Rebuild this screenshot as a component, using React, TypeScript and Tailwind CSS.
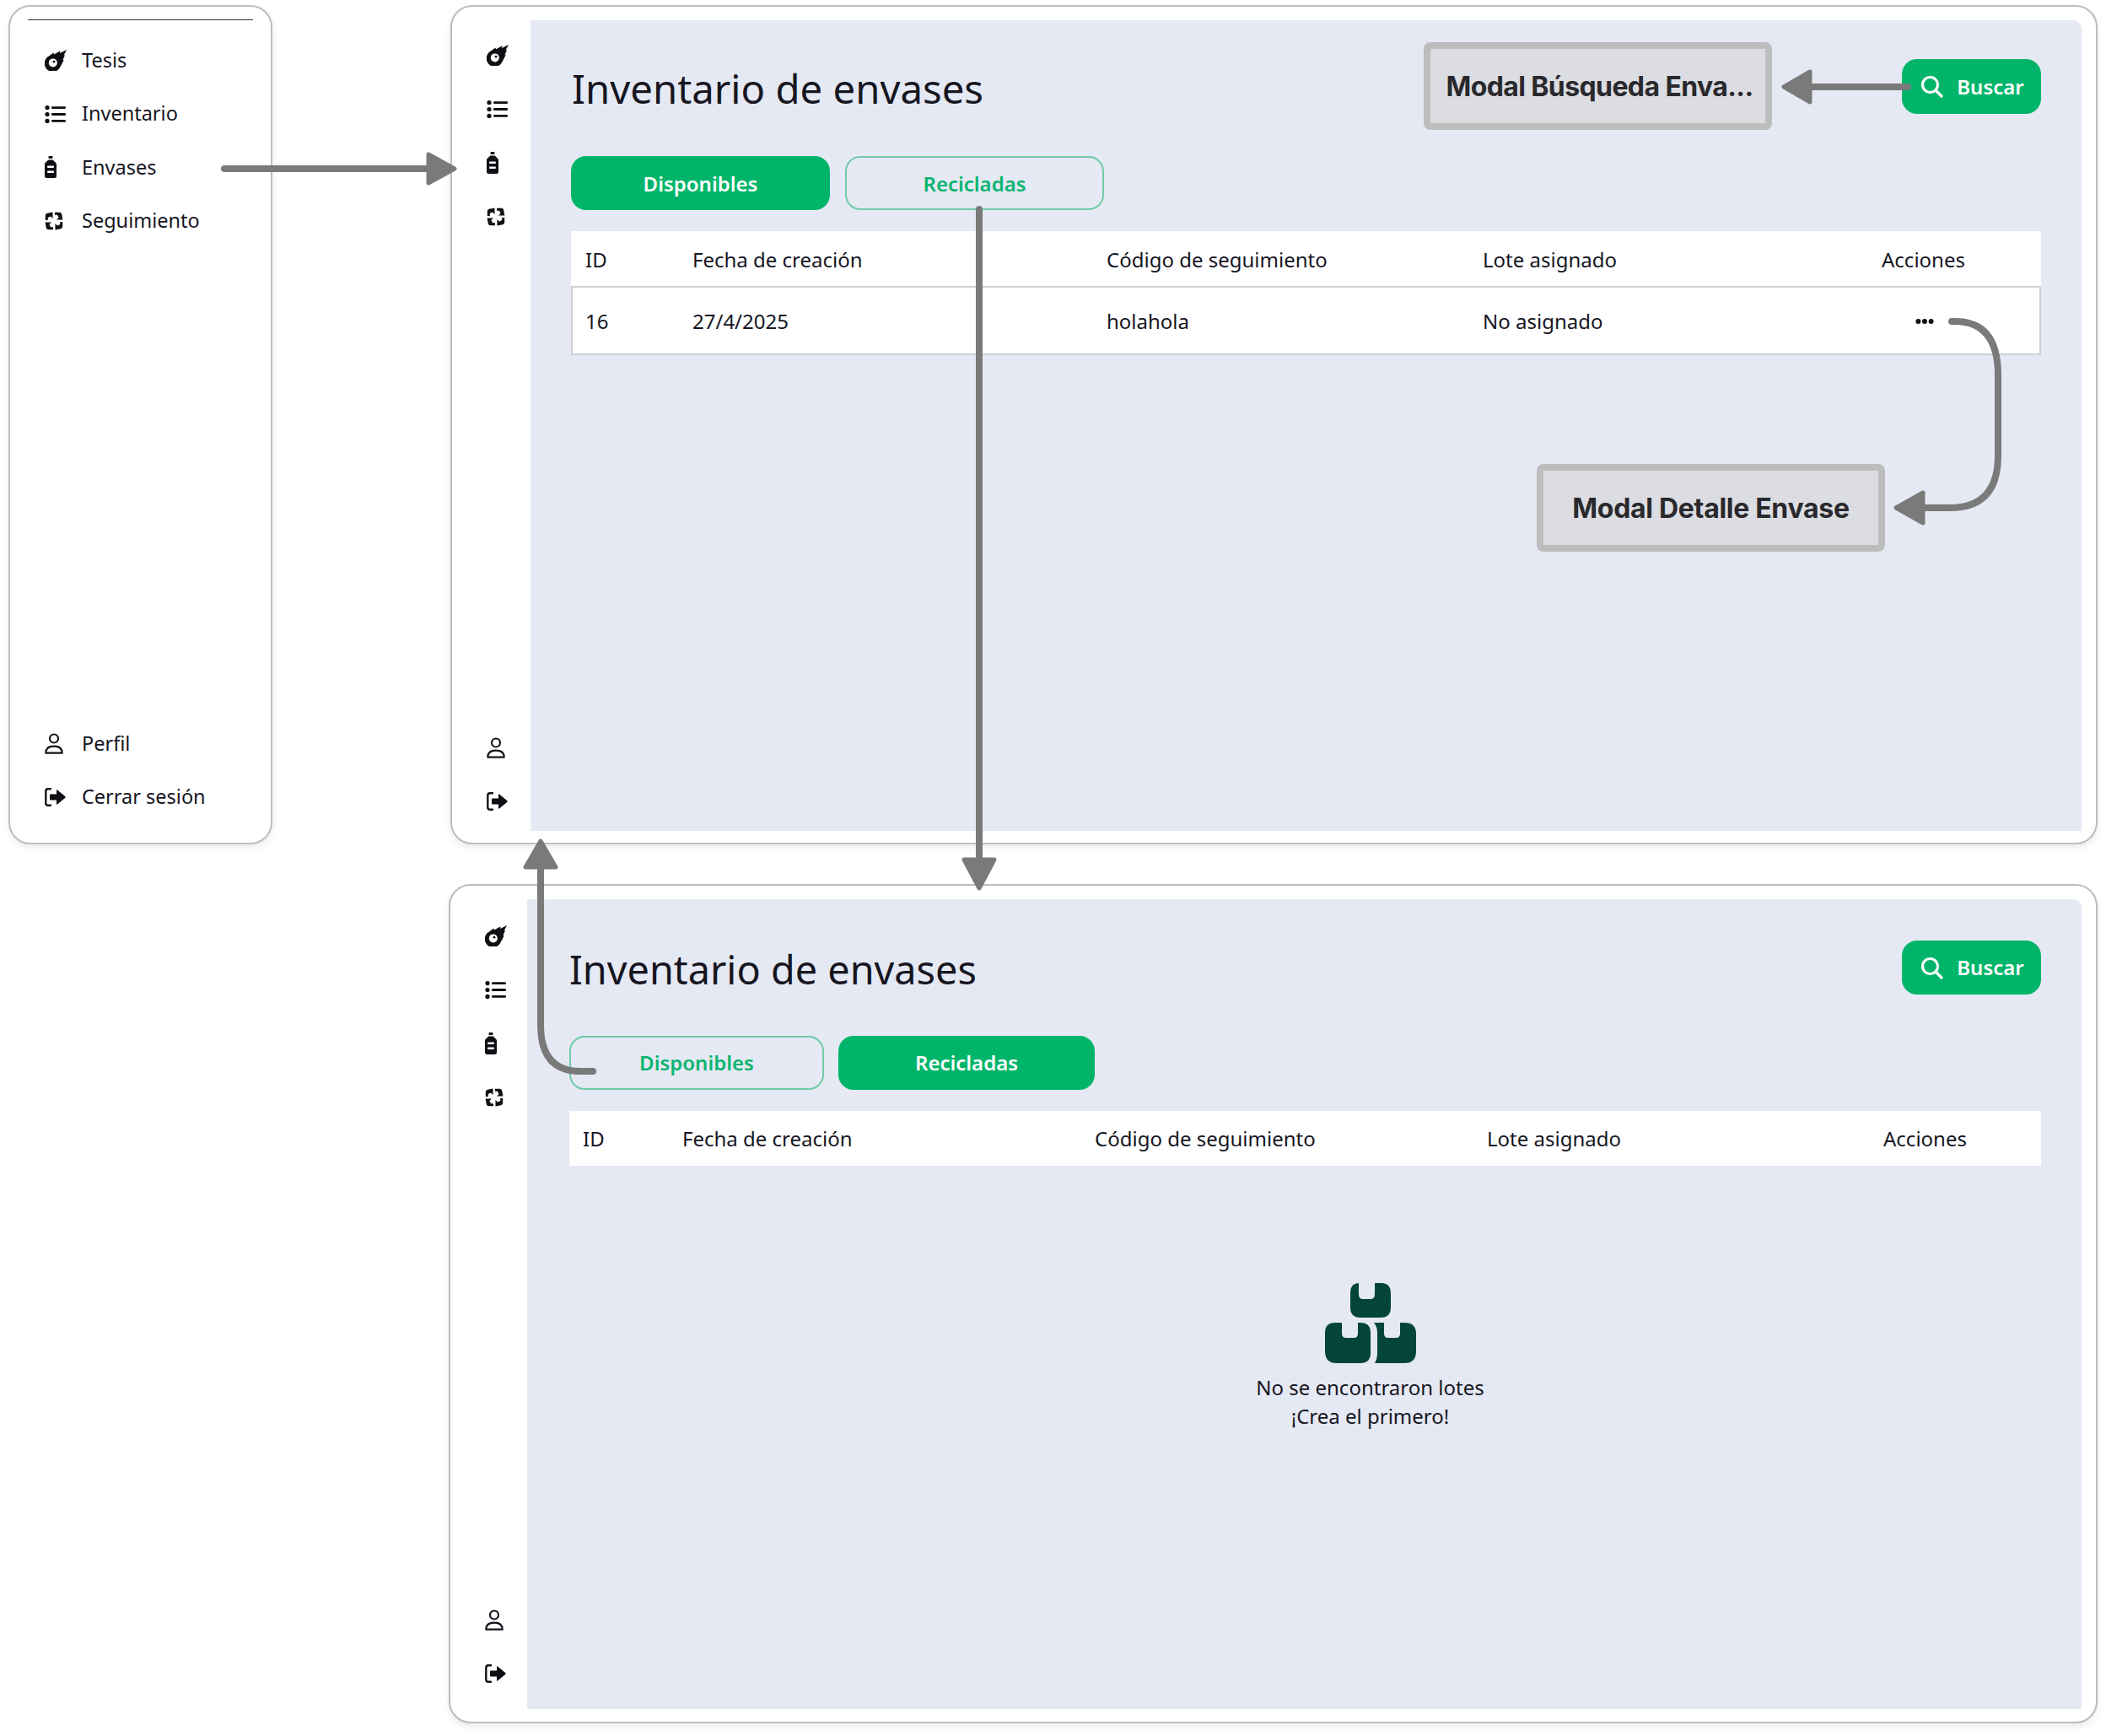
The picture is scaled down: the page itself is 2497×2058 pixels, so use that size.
import React from "react";

const Meteor = () => (
  <svg width="26" height="25" viewBox="0 0 26 25" className="block">
    <path fill="#0f0f14" d="M5 7.5L10.5 3.4L11 5.4L18.6 1.2L18 4L26 0L22.6 6.6L24 6.2L21.4 12.2L22.8 12L18.6 20A9.8 9.8 0 1 1 5 7.5Z" />
    <circle cx="9.8" cy="15.4" r="5" fill="#fff" />
    <circle cx="11" cy="14.2" r="1.4" fill="#0f0f14" />
  </svg>
);
const ListI = () => (
  <svg width="26" height="21" viewBox="0 0 26 21" className="block" fill="#0f0f14">
    <circle cx="3" cy="2.6" r="2.6" /><circle cx="3" cy="10.5" r="2.6" /><circle cx="3" cy="18.4" r="2.6" />
    <rect x="8" y="1.2" width="17" height="2.8" rx="1.2" /><rect x="8" y="9.1" width="17" height="2.8" rx="1.2" /><rect x="8" y="17" width="17" height="2.8" rx="1.2" />
  </svg>
);
const Bottle = () => (
  <svg width="14" height="26" viewBox="0 0 14 26" className="block" fill="#0f0f14">
    <rect x="4.5" y="0" width="5" height="3" rx="1" />
    <path d="M4 4.5H10C10.5 6.5 14 7 14 10V23.5A2.5 2.5 0 0 1 11.5 26H2.5A2.5 2.5 0 0 1 0 23.5V10C0 7 3.5 6.5 4 4.5Z" />
    <rect x="3" y="11.5" width="8" height="2.6" rx="1" fill="#fff" />
    <rect x="3" y="17.5" width="8" height="2.6" rx="1" fill="#fff" />
  </svg>
);
const RecycleI = () => {
  const piece = "M0.8 10V4.5Q0.8 2.2 3 1.8L9.5 0.6V8L7 5.4L3.8 7V10Z";
  return (
    <svg width="22" height="22" viewBox="0 0 22 22" className="block" fill="#0f0f14">
      <path d={piece} />
      <path d={piece} transform="rotate(90 11 11)" />
      <path d={piece} transform="rotate(180 11 11)" />
      <path d={piece} transform="rotate(270 11 11)" />
    </svg>
  );
};
const UserI = () => (
  <svg width="22" height="25" viewBox="0 0 22 25" className="block" fill="none" stroke="#12121a" strokeWidth="2.2">
    <circle cx="11" cy="6.5" r="5" />
    <path d="M1.3 23.7C1.3 18.5 5 15.6 11 15.6C17 15.6 20.7 18.5 20.7 23.7Z" strokeLinejoin="round" />
  </svg>
);
const LogoutI = () => (
  <svg width="25" height="22" viewBox="0 0 25 22" className="block">
    <path d="M7 1.3H4Q1.3 1.3 1.3 4V18Q1.3 20.7 4 20.7H7" fill="none" stroke="#12121a" strokeWidth="2.4" strokeLinecap="round" />
    <path fill="#0f0f14" d="M7 7.5H14V2.8Q14 2 15 2.6L24.4 10.3Q25 11 24.4 11.7L15 19.4Q14 20 14 19.2V14.5H7Q6 14.5 6 13.5V8.5Q6 7.5 7 7.5Z" />
  </svg>
);
const SearchI = () => (
  <svg width="27" height="27" viewBox="0 0 27 27" className="block" fill="none" stroke="#fff" strokeWidth="3.2" strokeLinecap="round">
    <circle cx="11.5" cy="11.5" r="9" />
    <path d="M18 18L25 25" />
  </svg>
);

const top = [
  { label: "Tesis", icon: <Meteor /> },
  { label: "Inventario", icon: <ListI /> },
  { label: "Envases", icon: <Bottle /> },
  { label: "Seguimiento", icon: <RecycleI /> },
];
const bottom = [
  { label: "Perfil", icon: <UserI /> },
  { label: "Cerrar sesión", icon: <LogoutI /> },
];

const Win = ({ className, children }: { className: string; children: React.ReactNode }) => (
  <div className={`absolute flex border-2 border-[#bdbdbd] rounded-[26px] bg-white shadow-[0_4px_8px_rgba(0,0,0,0.08)] overflow-hidden ${className}`}>
    {children}
  </div>
);

const IconRail = ({ cls }: { cls: string }) => (
  <div className={`flex flex-col justify-between pl-[41px] shrink-0 ${cls}`}>
    <div className="flex flex-col">
      {top.map((i) => (
        <div key={i.label} className="h-16 flex items-center">{i.icon}</div>
      ))}
    </div>
    <div className="flex flex-col">
      {bottom.map((i) => (
        <div key={i.label} className="h-[63px] flex items-center">{i.icon}</div>
      ))}
    </div>
  </div>
);

const BuscarBtn = ({ h }: { h: string }) => (
  <div className={`w-[165px] ${h} shrink-0 rounded-[18px] bg-[#00b56a] flex items-center justify-center gap-[16px] pl-[2px] text-white text-[24px] font-semibold`}>
    <SearchI />
    <span>Buscar</span>
  </div>
);

const Tab = ({ label, active, cls }: { label: string; active: boolean; cls: string }) => (
  <div
    className={`${cls} flex items-center justify-center rounded-[18px] text-[24px] font-semibold ${
      active ? "bg-[#00b56a] text-white" : "border-2 border-[#6fcba6] text-[#0ab56f]"
    }`}
  >
    {label}
  </div>
);

export default function App() {
  return (
    <div className="relative w-[2497px] h-[2058px] bg-white overflow-hidden text-[#16161f] font-['Noto_Sans','Open_Sans',sans-serif]">
      {/* expanded sidebar */}
      <Win className="left-[10px] top-[6px] w-[313px] h-[995px] flex-col">
        <div className="mx-[21px] mt-[15px] border-t border-[#2f3344]" />
        <div className="flex flex-col flex-1 justify-between pl-[41px] pb-[23px] mt-[16px]">
          <div className="flex flex-col">
            {top.map((i) => (
              <div key={i.label} className="h-[63.4px] flex items-center text-[23.5px]">
                <span className="w-[44px] shrink-0">{i.icon}</span>
                {i.label}
              </div>
            ))}
          </div>
          <div className="flex flex-col">
            {bottom.map((i) => (
              <div key={i.label} className="h-[63px] flex items-center text-[23.5px]">
                <span className="w-[44px] shrink-0">{i.icon}</span>
                {i.label}
              </div>
            ))}
          </div>
        </div>
      </Win>

      {/* Disponibles */}
      <Win className="left-[534px] top-[6px] w-[1953px] h-[995px]">
        <IconRail cls="w-[93px] pt-[25px] pb-[18px]" />
        <div className="flex-1 mt-[16px] mb-[14px] mr-[17px] bg-[#e5e9f4] rounded-tr-[10px] pl-[48px] pr-[48px] pt-[46px]">
          <div className="flex items-center justify-between">
            <h1 className="text-[47.3px] h-[65px] leading-[69px] pl-[1px] font-normal">Inventario de envases</h1>
            <BuscarBtn h="h-[65px]" />
          </div>
          <div className="flex gap-[18px] mt-[50px]">
            <Tab label="Disponibles" active cls="w-[307px] h-[64px] pt-[2px]" />
            <Tab label="Recicladas" active={false} cls="w-[307px] h-[64px] pt-[2px]" />
          </div>
          <div className="mt-[25px] text-[24px]">
            <div className="grid grid-cols-[127px_491px_446px_473px_1fr] items-center h-[67px] bg-white pl-[17px] pt-[2px] border-b-2 border-[#d0d0d4]">
              <span>ID</span><span>Fecha de creación</span><span>Código de seguimiento</span><span>Lote asignado</span><span>Acciones</span>
            </div>
            <div className="grid grid-cols-[127px_491px_446px_473px_1fr] items-center h-[80px] bg-white pl-[15px] pt-[2px] border-x-2 border-b-2 border-[#d0d0d4]">
              <span>16</span><span>27/4/2025</span><span>holahola</span><span>No asignado</span>
              <span className="pl-[40px]">
                <svg width="22" height="8" viewBox="0 0 22 8" fill="#12121a" className="block">
                  <circle cx="3.4" cy="4" r="3" /><circle cx="11" cy="4" r="3" /><circle cx="18.6" cy="4" r="3" />
                </svg>
              </span>
            </div>
          </div>
        </div>
      </Win>

      {/* Recicladas */}
      <Win className="left-[532px] top-[1048px] w-[1955px] h-[995px]">
        <IconRail cls="w-[91px] pt-[27px] pb-[26px]" />
        <div className="flex-1 mt-[16px] mb-[15px] mr-[17px] bg-[#e5e9f4] rounded-tr-[10px] pl-[50px] pr-[48px] pt-[49px]">
          <div className="flex items-center justify-between">
            <h1 className="text-[46.8px] h-[64px] leading-[68px] font-normal">Inventario de envases</h1>
            <BuscarBtn h="h-[64px]" />
          </div>
          <div className="flex gap-[17px] mt-[49px]">
            <Tab label="Disponibles" active={false} cls="w-[302px] h-[64px]" />
            <Tab label="Recicladas" active cls="w-[304px] h-[64px]" />
          </div>
          <div className="mt-[25px] grid grid-cols-[118px_489px_465px_470px_1fr] items-center h-[65px] bg-white pl-[16px] text-[24px]">
            <span>ID</span><span>Fecha de creación</span><span>Código de seguimiento</span><span>Lote asignado</span><span>Acciones</span>
          </div>
          <div className="mt-[139px] flex flex-col items-center pl-[154px]">
            <svg width="108" height="95" viewBox="0 0 108 95" fill="#03453a" className="block">
              <path d="M41 0H30Q30 0 30 0H40V13Q40 19 45 19H54Q59 19 59 13V0H66Q78 0 78 12V29Q78 41 66 41H42Q30 41 30 29V12Q30 0 41 0Z" />
              <path d="M12 47H20V60Q20 65 25 65H34Q39 65 39 60V47H42Q54 47 54 59V83Q54 95 42 95H14Q0 95 0 81V59Q0 47 12 47Z" />
              <path d="M60 47H70V60Q70 65 75 65H84Q89 65 89 60V47H94Q108 47 108 60V81Q108 95 94 95H59Q62 90 62 83V59Q62 52 58 47Z" />
            </svg>
            <p className="text-[24px] leading-[34px] mt-[12px] text-center">No se encontraron lotes<br />¡Crea el primero!</p>
          </div>
        </div>
      </Win>

      {/* modal labels */}
      <div className="absolute left-[1688px] top-[50px] w-[413px] h-[104px] pt-[2px] pl-[4px] rounded-[8px] border-[8px] border-[#bdbdbd] bg-[#dcdde2] flex items-center justify-center text-[32px] font-bold text-[#29292d] font-['Inter',sans-serif] tracking-[-0.6px] whitespace-nowrap">
        Modal Búsqueda Enva...
      </div>
      <div className="absolute left-[1822px] top-[550px] w-[413px] h-[104px] pt-[2px] rounded-[8px] border-[8px] border-[#bdbdbd] bg-[#dcdde2] flex items-center justify-center text-[32px] font-bold text-[#29292d] font-['Inter',sans-serif] tracking-[-0.3px] whitespace-nowrap">
        Modal Detalle Envase
      </div>

      {/* connector arrows */}
      <svg width="2497" height="2058" viewBox="0 0 2497 2058" className="absolute left-0 top-0 pointer-events-none" fill="none" stroke="#7a7a7a" strokeWidth="8" strokeLinecap="round" strokeLinejoin="round">
        <path d="M266 200H510" />
        <path d="M508 183L539 200L508 217Z" fill="#7a7a7a" strokeWidth="5" />
        <path d="M2262 103H2140" />
        <path d="M2146 85L2115 103L2146 121Z" fill="#7a7a7a" strokeWidth="5" />
        <path d="M1161 248V1020" />
        <path d="M1143 1019H1179L1161 1053Z" fill="#7a7a7a" strokeWidth="5" />
        <path d="M703 1270H688Q641 1270 641 1215V1030" />
        <path d="M623 1028H659L641 997Z" fill="#7a7a7a" strokeWidth="5" />
        <path d="M2314 381H2318Q2369 381 2369 445V540Q2369 602 2312 602H2275" />
        <path d="M2280 584L2248 602L2280 620Z" fill="#7a7a7a" strokeWidth="5" />
      </svg>
    </div>
  );
}
